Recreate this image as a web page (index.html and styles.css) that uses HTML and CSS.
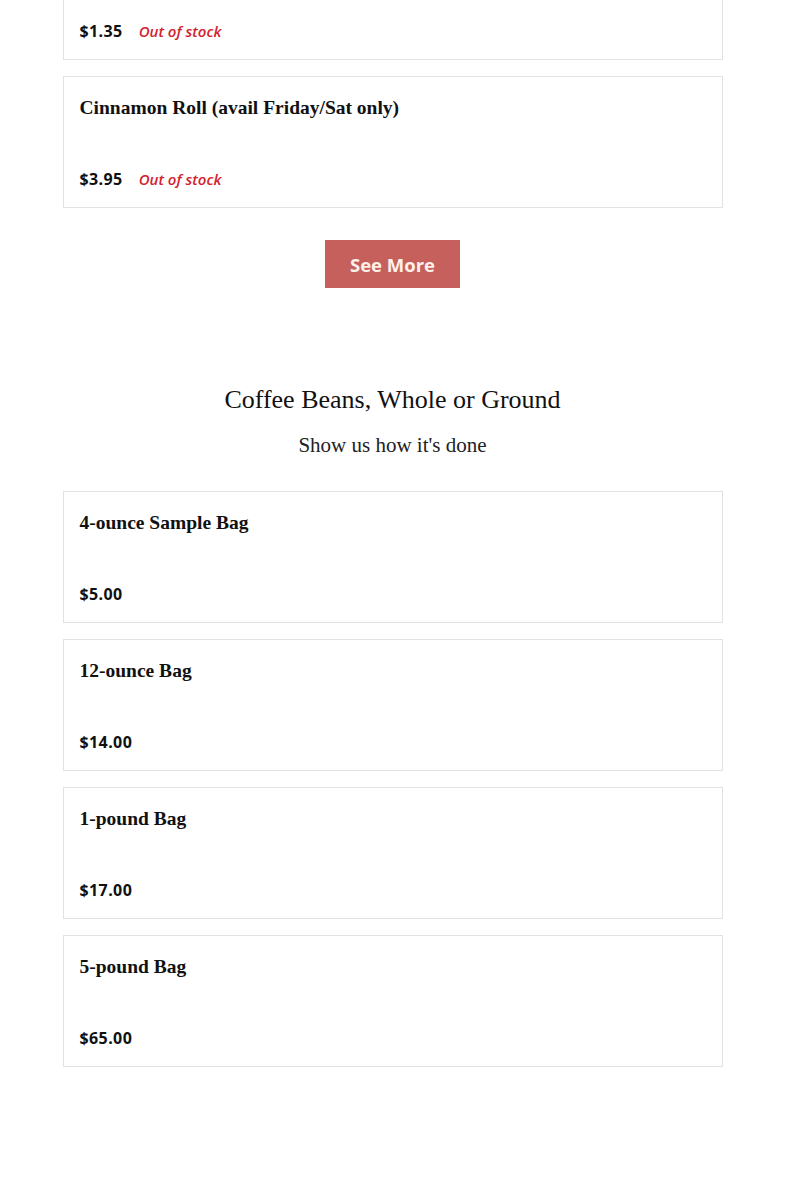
FILE: index.html
```html
<!DOCTYPE html>
<html lang="en">
<head>
<meta charset="utf-8">
<title>Menu</title>
<link rel="stylesheet" href="styles.css">
</head>
<body>
<main class="page">
  <section class="section section-top">
    <div class="list">
      <div class="card">
        <div class="card-price"><span class="price">$1.35</span><span class="stock">Out of stock</span></div>
      </div>
      <div class="card">
        <h3 class="card-title">Cinnamon Roll (avail Friday/Sat only)</h3>
        <div class="card-price"><span class="price">$3.95</span><span class="stock">Out of stock</span></div>
      </div>
    </div>
    <div class="more-row"><button class="btn-more">See More</button></div>
  </section>

  <section class="section">
    <h2 class="section-title">Coffee Beans, Whole or Ground</h2>
    <p class="section-sub">Show us how it's done</p>
    <div class="list">
      <div class="card">
        <h3 class="card-title">4-ounce Sample Bag</h3>
        <div class="card-price"><span class="price">$5.00</span></div>
      </div>
      <div class="card">
        <h3 class="card-title">12-ounce Bag</h3>
        <div class="card-price"><span class="price">$14.00</span></div>
      </div>
      <div class="card">
        <h3 class="card-title">1-pound Bag</h3>
        <div class="card-price"><span class="price">$17.00</span></div>
      </div>
      <div class="card">
        <h3 class="card-title">5-pound Bag</h3>
        <div class="card-price"><span class="price">$65.00</span></div>
      </div>
    </div>
  </section>
</main>
</body>
</html>
```
FILE: styles.css
```css
* { box-sizing: border-box; }
html, body { margin: 0; padding: 0; background: #fff; }
body { color: #111; }
.page {
  width: 660px;
  margin: 0 auto;
  padding-bottom: 112px;
}
.section-top { margin-top: -72px; }
.list {
  display: flex;
  flex-direction: column;
  gap: 16px;
}
.card {
  border: 1px solid #e2e2e2;
  height: 132px;
  padding: 16px 16px 17px 16px;
  display: flex;
  flex-direction: column;
}
.card-title {
  margin: 0;
  font-family: "Liberation Serif", "DejaVu Serif", serif;
  font-weight: 700;
  font-size: 19.5px;
  line-height: 30px;
  color: #111;
}
.card-price {
  margin-top: auto;
  display: flex;
  align-items: baseline;
  gap: 16px;
  line-height: 22px;
}
.price {
  font-family: "Open Sans", "Liberation Sans", sans-serif;
  font-weight: 700;
  font-size: 16px;
  letter-spacing: 0.4px;
  color: #111;
}
.stock {
  font-family: "Open Sans", "Liberation Sans", sans-serif;
  font-style: italic;
  font-weight: 600;
  font-size: 15px;
  color: #d2232f;
}
.more-row {
  display: flex;
  justify-content: center;
  margin-top: 32px;
}
.btn-more {
  width: 135px;
  height: 48px;
  border: none;
  background: #c5605c;
  color: #fdf0ea;
  font-family: "Open Sans", "Liberation Sans", sans-serif;
  font-weight: 700;
  font-size: 18.5px;
  cursor: pointer;
}
.section-title {
  margin: 95px 0 0;
  text-align: center;
  font-family: "Liberation Serif", "DejaVu Serif", serif;
  font-weight: 400;
  font-size: 26px;
  line-height: 34px;
  color: #111;
}
.section-sub {
  margin: 14px 0 32px;
  text-align: center;
  font-family: "Liberation Serif", "DejaVu Serif", serif;
  font-size: 21px;
  line-height: 28px;
  color: #222;
}
```
